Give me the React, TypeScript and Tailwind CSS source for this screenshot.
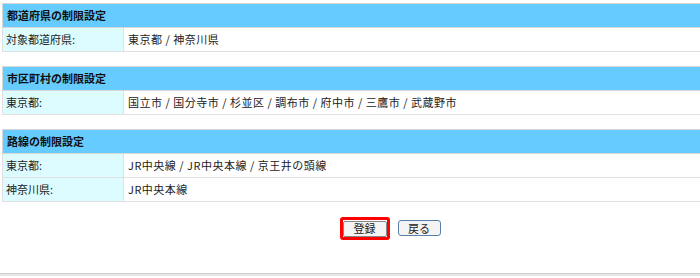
export default function App() {
  const sections = [
    {
      title: '都道府県の制限設定',
      rows: [['対象都道府県:', '東京都 / 神奈川県']],
    },
    {
      title: '市区町村の制限設定',
      rows: [['東京都:', '国立市 / 国分寺市 / 杉並区 / 調布市 / 府中市 / 三鷹市 / 武蔵野市']],
    },
    {
      title: '路線の制限設定',
      rows: [
        ['東京都:', 'JR中央線 / JR中央本線 / 京王井の頭線'],
        ['神奈川県:', 'JR中央本線'],
      ],
    },
  ];

  return (
    <div
      className="w-[700px] h-[278px] bg-white text-[11px] text-[#222] overflow-hidden"
      style={{ fontFamily: '"Noto Sans CJK JP", "Liberation Sans", sans-serif' }}
    >
      <div className="pt-[3px] pl-[2px] flex flex-col gap-[14px]">
        {sections.map((s) => (
          <table key={s.title} className="w-[698px] border-collapse">
            <tbody>
              <tr>
                <th
                  colSpan={2}
                  className="h-[24px] p-0 bg-[#66ccff] border border-[#d8d8d8] border-r-0 text-left font-bold pl-[4px] text-[#111]"
                >
                  {s.title}
                </th>
              </tr>
              {s.rows.map(([label, value]) => (
                <tr key={label}>
                  <td className="w-[121px] h-[24px] p-0 bg-[#dcfcff] border border-[#e0e0e0] pl-[3px]">{label}</td>
                  <td className="h-[24px] p-0 bg-white border border-[#e0e0e0] border-r-0 pl-[4px] tracking-[0.5px]">
                    {value.split(' / ').join('\u00a0/\u00a0')}
                  </td>
                </tr>
              ))}
            </tbody>
          </table>
        ))}
      </div>

      <div className="flex justify-center items-center gap-[8px] mt-[15px] pl-[80px]">
        <div className="border-[3px] border-[#ff0000] rounded-[3px]">
          <button className="w-[44px] h-[16px] bg-[#f4f4f4] border border-[#888] rounded-[2px] text-[11px] leading-none">
            登録
          </button>
        </div>
        <button className="w-[43px] h-[16px] bg-[#f4f4f4] border border-[#5a7fa8] rounded-[3px] text-[11px] leading-none">
          戻る
        </button>
      </div>

      <div className="mt-[33px] h-[3px] border-t border-[#cfcfcf] bg-[#e6e6e6]" />
    </div>
  );
}
